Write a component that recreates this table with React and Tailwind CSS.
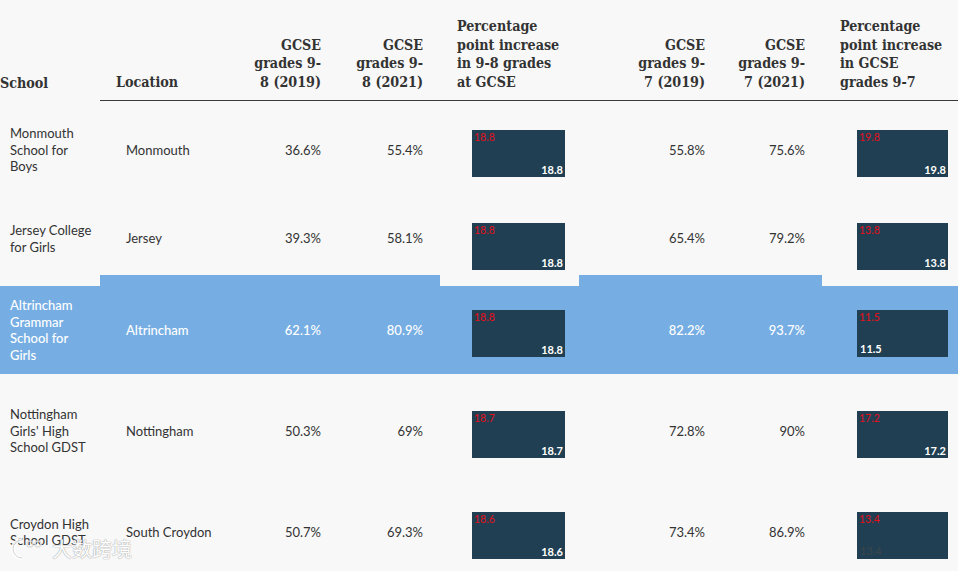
import React from 'react'

const rows = [
  { school: 'Monmouth School for Boys', loc: 'Monmouth', a: '36.6%', b: '55.4%', p1: '18.8', c: '55.8%', d: '75.6%', p2: '19.8', h: 'h-[98px]' },
  { school: 'Jersey College for Girls', loc: 'Jersey', a: '39.3%', b: '58.1%', p1: '18.8', c: '65.4%', d: '79.2%', p2: '13.8', h: 'h-[87px]', pb: true },
  { school: 'Altrincham Grammar School for Girls', loc: 'Altrincham', a: '62.1%', b: '80.9%', p1: '18.8', c: '82.2%', d: '93.7%', p2: '11.5', h: 'h-[88px]', hl: true, p2left: 'white' },
  { school: "Nottingham Girls' High School GDST", loc: 'Nottingham', a: '50.3%', b: '69%', p1: '18.7', c: '72.8%', d: '90%', p2: '17.2', h: 'h-[114px]' },
  { school: 'Croydon High School GDST', loc: 'South Croydon', a: '50.7%', b: '69.3%', p1: '18.6', c: '73.4%', d: '86.9%', p2: '13.4', h: 'h-[88px]', p2left: 'dark' },
]

const serif = { fontFamily: '"DejaVu Serif Condensed", "DejaVu Serif", serif' }

function Box({ value, left, w }) {
  return (
    <div className={`relative ${w} h-[47px] mt-[7px] bg-[#203f52]`}>
      <span className="absolute left-[2px] top-[2px] text-[10.5px] leading-none text-[#e3101c]">{value}</span>
      {left === 'white' && <span className="absolute left-[3px] bottom-[3px] text-[11px] leading-none font-bold text-white">{value}</span>}
      {left === 'dark' && <span className="absolute left-[3px] bottom-[3px] text-[11px] leading-none font-bold text-[#34454f]">{value}</span>}
      {!left && <span className="absolute right-[2px] bottom-[2px] text-[11px] leading-none font-bold text-white">{value}</span>}
    </div>
  )
}

function Head({ children, right, className = '' }) {
  return (
    <div className={`flex items-end pb-[9px] border-b border-[#3a3a3a] ${right ? 'justify-end text-right pr-[17px]' : ''} ${className}`}>
      <div className="text-[14.2px] leading-[18.5px] font-bold text-[#333]" style={serif}>{children}</div>
    </div>
  )
}

export default function App() {
  return (
    <div className="relative w-[958px] h-[571px] overflow-hidden bg-[#f8f8f8] text-[#333]" style={{ fontFamily: 'Lato, "Noto Sans", sans-serif' }}>
      <div className="grid grid-cols-[100px_136px_102px_102px_139px_143px_100px_136px] h-[101px]">
        <div className="flex items-end pb-[9px]">
          <div className="text-[14.2px] leading-[18.5px] font-bold text-[#333]" style={serif}>School</div>
        </div>
        <Head className="pl-[16px]">Location</Head>
        <Head right>GCSE<br />grades 9-<br />8 (2019)</Head>
        <Head right>GCSE<br />grades 9-<br />8 (2021)</Head>
        <Head className="pl-[17px]">Percentage<br />point increase<br />in 9-8 grades<br />at GCSE</Head>
        <Head right>GCSE<br />grades 9-<br />7 (2019)</Head>
        <Head right>GCSE<br />grades 9-<br />7 (2021)</Head>
        <Head className="pl-[18px]">Percentage<br />point increase<br />in GCSE<br />grades 9-7</Head>
      </div>

      {rows.map((r, i) => {
        const bg = r.hl ? 'bg-[#76aee3] text-white font-medium' : ''
        const raise = r.hl ? '-mt-[11px] pt-[11px]' : ''
        const pb = r.pb ? 'pb-[8px]' : ''
        return (
          <div key={i} className={`grid grid-cols-[100px_136px_102px_102px_139px_143px_100px_136px] text-[13px] leading-[16.5px] ${r.h}`}>
            <div className={`flex items-center pl-[10px] pr-[8px] ${bg} ${pb}`}>{r.school}</div>
            <div className={`flex items-center pl-[26px] ${bg} ${raise} ${pb}`}>{r.loc}</div>
            <div className={`flex items-center justify-end pr-[17px] ${bg} ${raise} ${pb}`}>{r.a}</div>
            <div className={`flex items-center justify-end pr-[17px] ${bg} ${raise} ${pb}`}>{r.b}</div>
            <div className={`flex items-center pl-[32px] ${bg}`}><Box value={r.p1} w="w-[93px]" /></div>
            <div className={`flex items-center justify-end pr-[17px] ${bg} ${raise} ${pb}`}>{r.c}</div>
            <div className={`flex items-center justify-end pr-[17px] ${bg} ${raise} ${pb}`}>{r.d}</div>
            <div className={`flex items-center pl-[35px] ${bg}`}><Box value={r.p2} left={r.p2left} w="w-[91px]" /></div>
          </div>
        )
      })}

      <div className="absolute left-[8px] top-[536px] flex items-center gap-[4px] opacity-90 pointer-events-none">
        <svg width="40" height="26" viewBox="0 0 40 26">
          <path d="M14 4 A9 9 0 1 0 14 22" fill="none" stroke="#fff" strokeWidth="4" />
          <path d="M14 4 A9 9 0 1 0 14 22" fill="none" stroke="#cfcfcf" strokeWidth="1" />
          <circle cx="22" cy="8" r="3" fill="none" stroke="#ddd" strokeWidth="1.5" />
          <circle cx="30" cy="8" r="3" fill="none" stroke="#ddd" strokeWidth="1.5" />
        </svg>
        <span className="text-[20px] leading-none text-white" style={{ fontFamily: '"Noto Sans CJK SC", sans-serif', textShadow: '0 0 1px #999, 0 0 1px #999' }}>大数跨境</span>
      </div>
    </div>
  )
}
